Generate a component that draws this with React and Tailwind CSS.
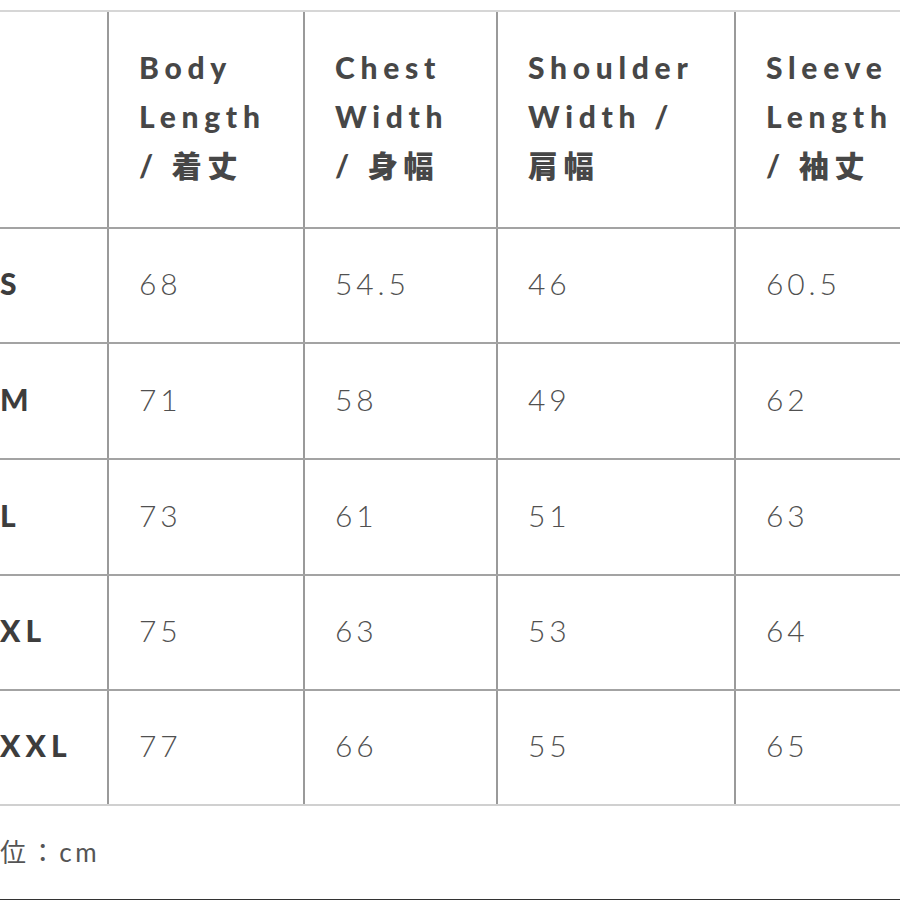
import React from 'react';

const headers = [
  ['Body', 'Length', '/ 着丈'],
  ['Chest', 'Width', '/ 身幅'],
  ['Shoulder', 'Width /', '肩幅'],
  ['Sleeve', 'Length', '/ 袖丈'],
];

const rows = [
  { size: 'S', values: ['68', '54.5', '46', '60.5'], h: 'h-[115px]' },
  { size: 'M', values: ['71', '58', '49', '62'], h: 'h-[116px]' },
  { size: 'L', values: ['73', '61', '51', '63'], h: 'h-[116px]' },
  { size: 'XL', values: ['75', '63', '53', '64'], h: 'h-[115px]' },
  { size: 'XXL', values: ['77', '66', '55', '65'], h: 'h-[115px]' },
];

// column widths after the size column (border included)
const colWidths = ['w-[196px]', 'w-[193px]', 'w-[238px]', 'w-[220px]'];

const font = { fontFamily: 'Lato, "Noto Sans CJK JP", sans-serif' };

export default function App() {
  return (
    <div className="w-[900px] h-[900px] bg-white overflow-hidden border-b border-[#333] pt-[10px]" style={font}>
      <div className="w-[960px]">
        {/* Header */}
        <div className="flex h-[219px] border-t-2 border-b-2 border-t-[#d6d6d6] border-b-[#a3a3a3]">
          <div className="w-[107px] shrink-0" />
          {headers.map((lines, i) => (
            <div
              key={i}
              className={`${colWidths[i]} shrink-0 border-l-2 border-[#9a9a9a] pl-[30px] pb-[6px] flex flex-col justify-center`}
            >
              {lines.map((line, j) => (
                <div key={j} className="text-[30px] leading-[49px] font-black tracking-[0.19em] text-[#474747] whitespace-nowrap">
                  {line}
                </div>
              ))}
            </div>
          ))}
        </div>

        {/* Body rows */}
        {rows.map((row, r) => (
          <div
            key={row.size}
            className={`flex ${row.h} border-b-2 ${r === rows.length - 1 ? 'border-[#d0d0d0]' : 'border-[#a3a3a3]'}`}
          >
            <div className="w-[107px] shrink-0 flex items-center pb-[4px]">
              <span className="text-[30px] font-black tracking-[0.17em] text-[#3d3d3d]">{row.size}</span>
            </div>
            {row.values.map((v, i) => (
              <div
                key={i}
                className={`${colWidths[i]} shrink-0 border-l-2 border-[#9a9a9a] pl-[30px] pb-[4px] flex items-center`}
              >
                <span className="text-[30px] font-light tracking-[0.13em] text-[#505050]">{v}</span>
              </div>
            ))}
          </div>
        ))}

        {/* Unit note */}
        <div className="pt-[33px] text-[26px] tracking-[0.14em] text-[#555] leading-none">
          位：cm
        </div>
      </div>
    </div>
  );
}
